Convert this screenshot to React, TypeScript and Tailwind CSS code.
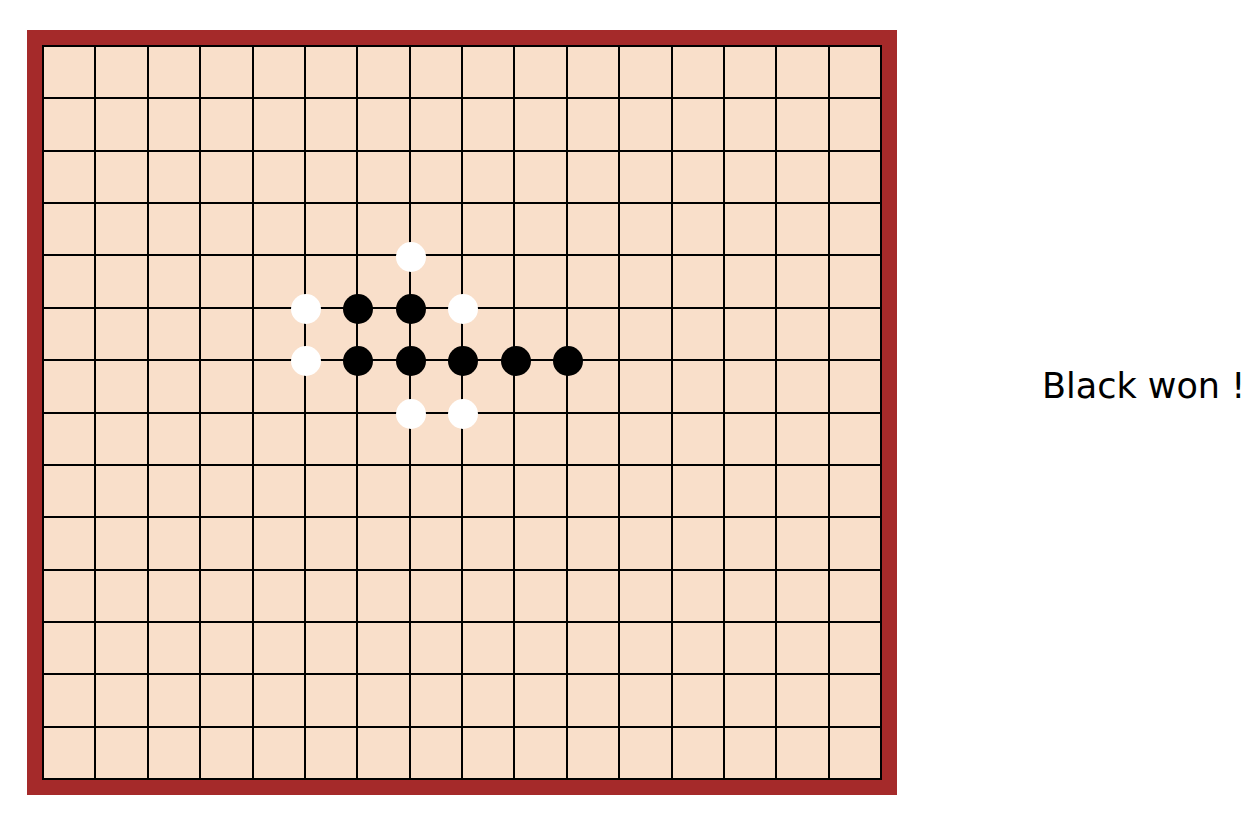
import React from "react";

type Stone = { c: number; r: number; color: "black" | "white" };

const COLS = 16;
const ROWS = 14;
const CELL = 52.4;

const stones: Stone[] = [
  { c: 7, r: 4, color: "white" },
  { c: 5, r: 5, color: "white" },
  { c: 6, r: 5, color: "black" },
  { c: 7, r: 5, color: "black" },
  { c: 8, r: 5, color: "white" },
  { c: 5, r: 6, color: "white" },
  { c: 6, r: 6, color: "black" },
  { c: 7, r: 6, color: "black" },
  { c: 8, r: 6, color: "black" },
  { c: 9, r: 6, color: "black" },
  { c: 10, r: 6, color: "black" },
  { c: 7, r: 7, color: "white" },
  { c: 8, r: 7, color: "white" },
];

const Board: React.FC = () => {
  const cells = Array.from({ length: COLS * ROWS });
  return (
    <div className="border-[15px] border-[#a52a2a] bg-[#f9dfca]">
      <div className="relative grid h-[735px] w-[840px] grid-cols-[repeat(16,1fr)] grid-rows-[repeat(14,1fr)] border-l-2 border-t-2 border-black">
        {cells.map((_, i) => (
          <div key={i} className="border-b-2 border-r-2 border-black" />
        ))}
        {stones.map((s, i) => (
          <div
            key={i}
            className={
              "absolute h-[30px] w-[30px] rounded-full " +
              (s.color === "black" ? "bg-black" : "bg-white")
            }
            style={{ left: s.c * CELL - 15, top: s.r * CELL - 15 }}
          />
        ))}
      </div>
    </div>
  );
}

export default function App() {
  return (
    <div className="flex min-h-screen items-start bg-white pl-[27px] pt-[30px] font-['DejaVu_Sans',sans-serif]">
      <Board />
      <p className="ml-[145px] mt-[330px] whitespace-nowrap text-[35px] text-black">
        Black won !
      </p>
    </div>
  );
}
